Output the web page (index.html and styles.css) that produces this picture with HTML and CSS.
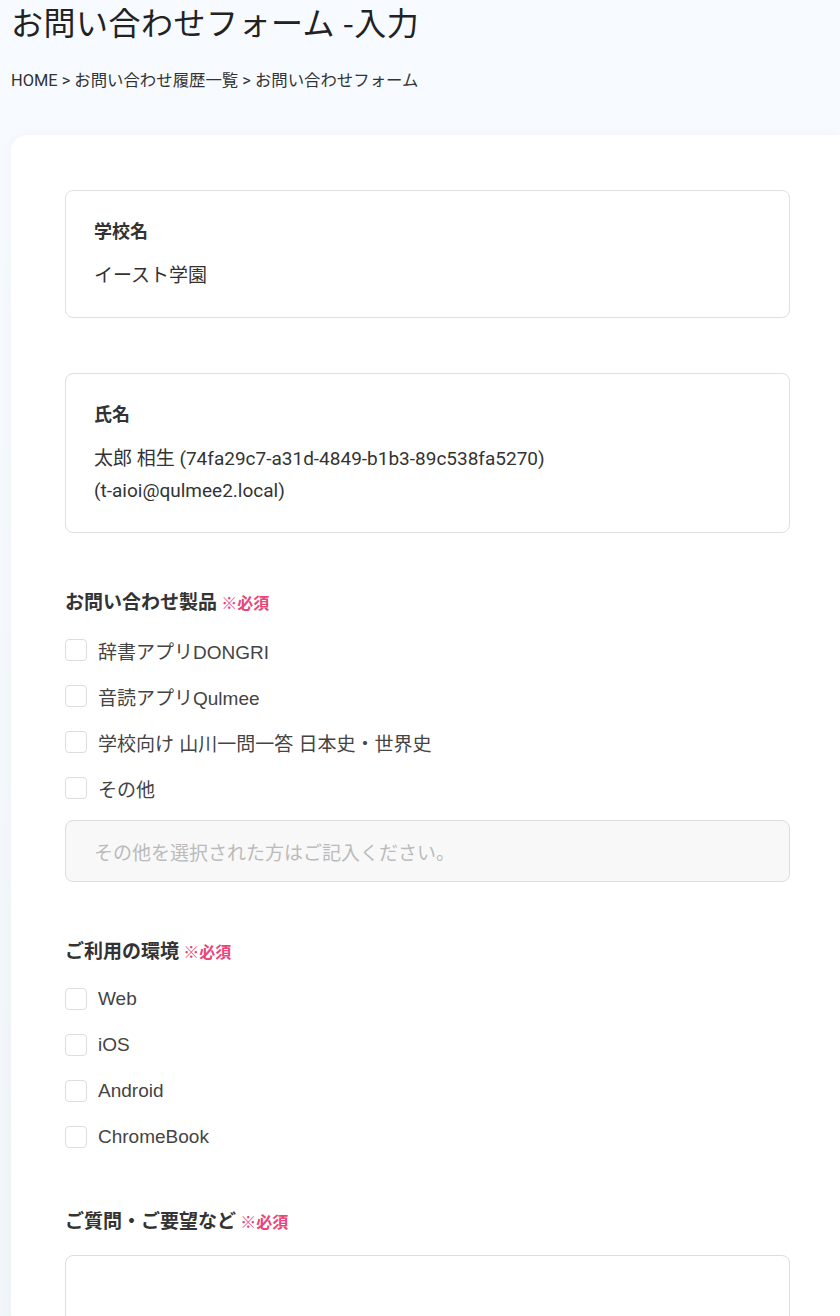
FILE: index.html
```html
<!DOCTYPE html>
<html lang="ja">
<head>
  <meta charset="UTF-8">
  <title>お問い合わせフォーム -入力</title>
  <link rel="stylesheet" href="styles.css">
</head>
<body>
  <header class="page-head">
    <h1>お問い合わせフォーム -入力</h1>
    <nav class="breadcrumb">HOME &gt; お問い合わせ履歴一覧 &gt; お問い合わせフォーム</nav>
  </header>

  <main class="panel">
    <form id="contactForm">
      <div class="info-card">
        <div class="info-label">学校名</div>
        <div class="info-value">イースト学園</div>
      </div>

      <div class="info-card">
        <div class="info-label">氏名</div>
        <div class="info-value">太郎 相生 (74fa29c7-a31d-4849-b1b3-89c538fa5270)<br>(t-aioi@qulmee2.local)</div>
      </div>

      <div class="field field-first">
        <div class="field-title">お問い合わせ製品 <span class="required">※必須</span></div>
        <div class="options">
          <label class="option"><input type="checkbox" name="product" value="dongri"> 辞書アプリDONGRI</label>
          <label class="option"><input type="checkbox" name="product" value="qulmee"> 音読アプリQulmee</label>
          <label class="option"><input type="checkbox" name="product" value="yamakawa"> 学校向け 山川一問一答 日本史・世界史</label>
          <label class="option"><input type="checkbox" name="product" value="other"> その他</label>
        </div>
        <input type="text" class="other-input" placeholder="その他を選択された方はご記入ください。">
      </div>

      <div class="field">
        <div class="field-title">ご利用の環境 <span class="required">※必須</span></div>
        <div class="options">
          <label class="option"><input type="checkbox" name="env" value="web"> Web</label>
          <label class="option"><input type="checkbox" name="env" value="ios"> iOS</label>
          <label class="option"><input type="checkbox" name="env" value="android"> Android</label>
          <label class="option"><input type="checkbox" name="env" value="chromebook"> ChromeBook</label>
        </div>
      </div>

      <div class="field field-last">
        <div class="field-title">ご質問・ご要望など <span class="required">※必須</span></div>
        <textarea class="message" rows="8"></textarea>
      </div>
    </form>
  </main>
</body>
</html>
```

FILE: styles.css
```css
body {
  margin: 0;
  padding: 0 0 0 11px;
  font-family: Roboto, "Noto Sans CJK JP", sans-serif;
  color: #333;
  background: linear-gradient(#f7fbff, #f0f5f8);
  overflow: hidden;
}

.page-head h1 {
  margin: 0;
  font-size: 32px;
  font-weight: 400;
  line-height: 42px;
  letter-spacing: 0.5px;
  color: #222;
  font-family: "Noto Sans CJK JP", sans-serif;
}

.breadcrumb {
  margin-top: 27px;
  font-size: 16.4px;
  line-height: 24px;
  color: #333;
}

.panel {
  margin-top: 42px;
  background: #fff;
  border-radius: 16px 0 0 0;
  box-shadow: 0 0 12px rgba(0,0,0,0.03);
  padding: 55px 50px 40px 54px;
  min-height: 1200px;
}

.info-card {
  border: 1px solid #e0e0e0;
  border-radius: 8px;
  padding: 26px 28px 25px;
  margin-bottom: 55px;
}

.info-label {
  font-size: 18px;
  font-weight: 700;
  line-height: 26px;
  font-family: "Noto Sans CJK JP", sans-serif;
}

.info-value {
  margin-top: 17px;
  font-size: 19px;
  line-height: 32px;
  color: #333;
}

.field {
  margin-top: 55px;
}

.field-first {
  margin-top: 1px;
}

.field-last {
  margin-top: 47px;
}

.field-title {
  font-family: "Noto Sans CJK JP", sans-serif;
  font-size: 19px;
  font-weight: 700;
  line-height: 26px;
  color: #333;
}

.required {
  font-size: 16px;
  color: #e8457a;
}

.options {
  margin-top: 12px;
}

.option {
  display: flex;
  align-items: center;
  gap: 11px;
  height: 46px;
  font-family: "Liberation Sans", "Noto Sans CJK JP", sans-serif;
  font-size: 19px;
  color: #444;
}

.option input {
  appearance: none;
  margin: 0;
  width: 22px;
  height: 22px;
  border: 1px solid #ddd;
  border-radius: 4px;
  background: #fff;
}

.other-input {
  display: block;
  box-sizing: border-box;
  width: 100%;
  height: 62px;
  margin-top: 9px;
  padding: 0 28px;
  border: 1px solid #ddd;
  border-radius: 8px;
  background: #f8f8f8;
  font-family: "Noto Sans CJK JP", sans-serif;
  font-size: 19px;
}

.other-input::placeholder {
  color: #bbb;
}

.message {
  display: block;
  box-sizing: border-box;
  width: 100%;
  height: 200px;
  margin-top: 21px;
  border: 1px solid #ddd;
  border-radius: 8px;
  resize: none;
}
```
